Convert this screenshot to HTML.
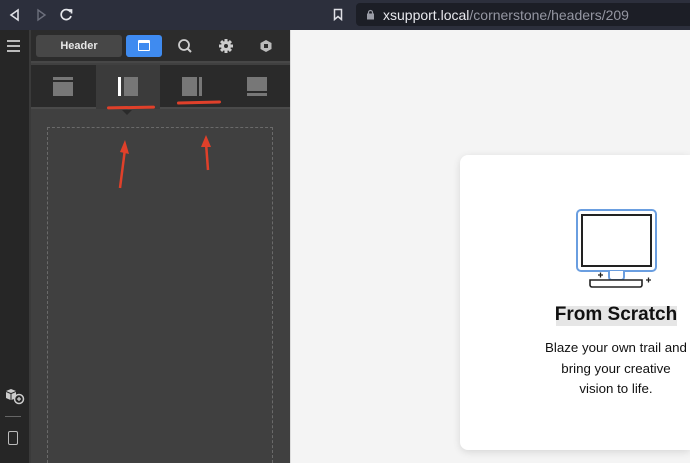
<!DOCTYPE html>
<html style="width:690px;height:463px;overflow:hidden"><head><style>
*{margin:0;padding:0;box-sizing:border-box}
body{width:690px;height:463px;overflow:hidden;position:relative;background:#f4f4f4;font-family:"Liberation Sans",sans-serif}
.abs{position:absolute}
</style></head><body>
<div class="abs" style="left:0;top:0;width:690px;height:30px;background:#2c2f3c"></div>
<svg class="abs" style="left:8px;top:8px" width="14" height="14"><path d="M10 2 L3 7 L10 12 Z" fill="none" stroke="#dfe0e6" stroke-width="1.6"/></svg>
<svg class="abs" style="left:34px;top:8px" width="14" height="14"><path d="M4 2 L11 7 L4 12 Z" fill="none" stroke="#6c6f7c" stroke-width="1.4"/></svg>
<svg class="abs" style="left:59px;top:7px" width="15" height="15"><path d="M11.5 5 A5 5 0 1 0 12 9" fill="none" stroke="#e6e7ec" stroke-width="1.7"/><path d="M9 3 L12.5 3 L12.5 6.5" fill="none" stroke="#e6e7ec" stroke-width="1.7"/></svg>
<svg class="abs" style="left:332px;top:8px" width="12" height="13"><path d="M2.5 1.5 H9.5 V11.5 L6 8.5 L2.5 11.5 Z" fill="none" stroke="#dfe0e6" stroke-width="1.5"/></svg>
<div class="abs" style="left:356px;top:3px;width:334px;height:23px;background:#1c1e26;border-radius:4px 0 0 4px"></div>
<svg class="abs" style="left:366px;top:9px" width="9" height="11"><rect x="1" y="4.5" width="7" height="6" fill="#9a9ca6"/><path d="M2.5 5 V3.5 A2 2 0 0 1 6.5 3.5 V5" fill="none" stroke="#9a9ca6" stroke-width="1.2"/></svg>
<div class="abs" style="left:383px;top:7px;font-size:14px;color:#e8e9ee;white-space:nowrap">xsupport.local<span style="color:#9496a2">/cornerstone/headers/209</span></div>

<div class="abs" style="left:0;top:30px;width:29px;height:433px;background:#262626"></div>
<div class="abs" style="left:29px;top:30px;width:2px;height:433px;background:#3a3a3a"></div>
<div class="abs" style="left:7px;top:40px;width:13px;height:2px;background:#bbb;box-shadow:0 5px 0 #bbb,0 10px 0 #bbb"></div>
<svg class="abs" style="left:4px;top:387px" width="22" height="18"><path d="M2 4 L7 2 L12 4 L7 6Z" fill="#ccc"/><path d="M2 5 V11 L6.5 13 V7Z M7.5 7 V13 L12 11 V5Z" fill="#ccc"/><circle cx="15" cy="12" r="4.5" fill="#262626" stroke="#ccc" stroke-width="1.5"/><path d="M15 10 V14 M13 12 H17" stroke="#ccc" stroke-width="1.3"/></svg>
<div class="abs" style="left:5px;top:416px;width:16px;height:1px;background:#666"></div>
<div class="abs" style="left:8px;top:431px;width:10px;height:14px;border:1.5px solid #bbb;border-radius:2px"></div>

<div class="abs" style="left:31px;top:30px;width:259px;height:433px;background:#404040"></div>
<div class="abs" style="left:31px;top:30px;width:259px;height:33px;background:#2c2c2c;border-bottom:2px solid #474747"></div>
<div class="abs" style="left:36px;top:35px;width:86px;height:22px;background:#474747;border-radius:3px;color:#e8e8e8;font-size:11px;font-weight:bold;text-align:center;line-height:22px">Header</div>
<div class="abs" style="left:126px;top:35px;width:36px;height:22px;background:#3f8bf0;border-radius:3px"></div>
<div class="abs" style="left:138px;top:40px;width:12px;height:11px;border:1.5px solid #fff;border-top-width:3px;border-radius:1px"></div>
<svg class="abs" style="left:177px;top:38px" width="16" height="16"><circle cx="7" cy="7" r="5" fill="none" stroke="#ccc" stroke-width="1.8"/><path d="M10.5 10.5 L14 14" stroke="#ccc" stroke-width="2"/></svg>
<svg class="abs" style="left:218px;top:38px" width="16" height="16"><g fill="#ccc"><circle cx="8" cy="8" r="5"/><rect x="6.5" y="1" width="3" height="14"/><rect x="1" y="6.5" width="14" height="3"/><rect x="6.5" y="1" width="3" height="14" transform="rotate(45 8 8)"/><rect x="6.5" y="1" width="3" height="14" transform="rotate(-45 8 8)"/></g><circle cx="8" cy="8" r="2" fill="#2c2c2c"/></svg>
<svg class="abs" style="left:259px;top:39px" width="14" height="14"><path d="M7 1 L12.5 4 V10 L7 13 L1.5 10 V4Z" fill="#bbb"/><rect x="5" y="5" width="4" height="4" fill="#2c2c2c"/></svg>

<div class="abs" style="left:31px;top:65px;width:259px;height:44px;background:#2a2a2a;border-bottom:2px solid #4a4a4a"></div>
<div class="abs" style="left:96px;top:65px;width:64px;height:44px;background:#3b3b3b"></div>
<div class="abs" style="left:53px;top:77px;width:20px;height:3px;background:#777"></div>
<div class="abs" style="left:53px;top:82px;width:20px;height:14px;background:#777"></div>
<div class="abs" style="left:118px;top:77px;width:3px;height:19px;background:#fff"></div>
<div class="abs" style="left:124px;top:77px;width:14px;height:19px;background:#777"></div>
<div class="abs" style="left:182px;top:77px;width:15px;height:19px;background:#777"></div>
<div class="abs" style="left:199px;top:77px;width:3px;height:19px;background:#777"></div>
<div class="abs" style="left:247px;top:77px;width:20px;height:14px;background:#777"></div>
<div class="abs" style="left:247px;top:93px;width:20px;height:3px;background:#777"></div>
<div class="abs" style="left:107px;top:106px;width:48px;height:3px;background:#e0402a;transform:rotate(-1deg);border-radius:2px"></div>
<div class="abs" style="left:177px;top:101px;width:44px;height:3px;background:#e0402a;transform:rotate(-1.5deg);border-radius:2px"></div>
<div class="abs" style="left:122px;top:110px;width:0;height:0;border-left:5px solid transparent;border-right:5px solid transparent;border-top:5px solid #2a2a2a"></div>
<div class="abs" style="left:47px;top:127px;width:226px;height:336px;border:1px dashed #6a6a6a;border-bottom:none"></div>
<svg class="abs" style="left:110px;top:135px" width="110" height="60"><path d="M10 53 L15 14" stroke="#e0402a" stroke-width="2.5"/><path d="M10 17 L15 5 L19 19Z" fill="#e0402a"/><path d="M98 35 L96 8" stroke="#e0402a" stroke-width="2.5"/><path d="M91 12 L96 0 L101 12Z" fill="#e0402a"/></svg>
<div class="abs" style="left:290px;top:30px;width:1px;height:433px;background:#ddd"></div>

<div class="abs" style="left:460px;top:155px;width:230px;height:295px;background:#fff;border-radius:8px 0 0 8px;box-shadow:0 2px 8px rgba(0,0,0,.12)"></div>
<svg class="abs" style="left:570px;top:205px" width="90" height="85"><rect x="7" y="5" width="79" height="61" rx="4" fill="#fff" stroke="#6a9ee0" stroke-width="2"/><rect x="12" y="10" width="69" height="51" fill="#fff" stroke="#222" stroke-width="2"/><path d="M39 66 V72 A3 3 0 0 0 42 75 H51 A3 3 0 0 0 54 72 V66" fill="#fff" stroke="#6a9ee0" stroke-width="2"/><path d="M20 75 H72 V80 A2 2 0 0 1 70 82 H22 A2 2 0 0 1 20 80Z" fill="#fff" stroke="#222" stroke-width="1.6"/><path d="M28 70 H33 M30.5 67.5 V72.5 M76 75 H81 M78.5 72.5 V77.5" stroke="#222" stroke-width="1.3"/></svg>
<div class="abs" style="left:556px;top:306px;width:121px;height:20px;background:#e6e6e6"></div>
<div class="abs" style="left:530px;top:304px;width:172px;text-align:center;font-size:19px;font-weight:bold;color:#111">From Scratch</div>
<div class="abs" style="left:530px;top:338px;width:172px;text-align:center;font-size:13.3px;line-height:20.5px;color:#111">Blaze your own trail and<br>bring your creative<br>vision to life.</div>
</body></html>
